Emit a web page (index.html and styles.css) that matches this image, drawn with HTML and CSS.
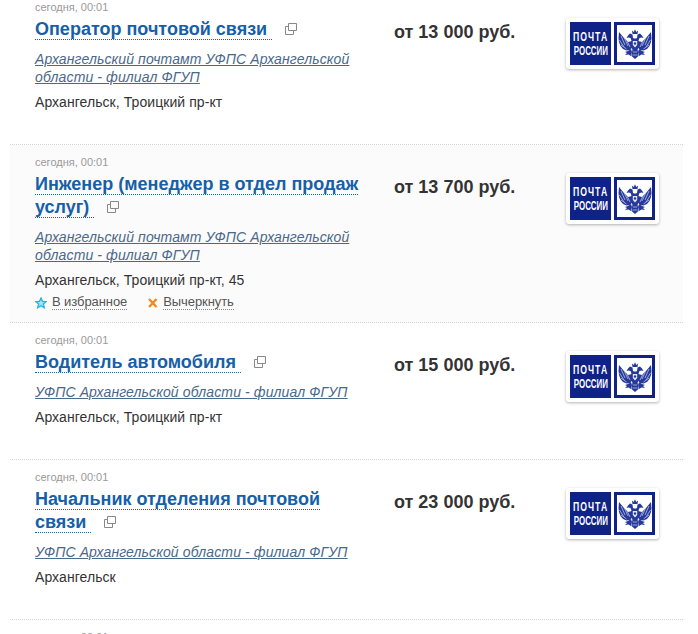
FILE: index.html
```html
<!DOCTYPE html>
<html lang="en">
<head>
    <meta charset="UTF-8">
    <meta name="viewport" content="width=device-width, initial-scale=1.0">
    <title>Вакансии</title>
    <link rel="stylesheet" href="styles.css">
</head>
<body>
    <svg class="defs" width="0" height="0">
        <g id="eagle-half">
            <!-- wing -->
            <path d="M14 12 L10 13 L6 9 L1 3 L.5 9 L1 13 L2.5 17 L5 20 L8.5 21.5 L12 21 L14.5 18 Z" fill="#26399a"/>
            <path d="M3 7 L7 16 M1.5 11 L6 18 M3 16 L8.5 20 M6 8.5 L10 17 M9 12 L12 18" stroke="#b9c2e8" stroke-width="0.8" fill="none"/>
            <!-- head -->
            <path d="M17 14 L14.5 14 L12.5 9 L10.5 8.5 L8.5 9 L10 6.5 L12 4.5 L14.5 5.5 L15 9 L17 10 Z" fill="#26399a"/>
            <!-- leg and tail -->
            <path d="M13 20 L10 22 L7 23 L9 24 L7 26 L10.5 25.5 L13 27 L14 23 Z" fill="#26399a"/>
            <path d="M14.5 20 L13.5 27 L17 30 L17 20 Z" fill="#26399a"/>
            <path d="M15 23 L17 23 M14.5 26 L17 26" stroke="#b9c2e8" stroke-width="0.8"/>
        </g>
        <symbol id="eagle" viewBox="0 0 34 30">
            <use href="#eagle-half"/>
            <use href="#eagle-half" transform="matrix(-1 0 0 1 34 0)"/>
            <!-- crown and breast -->
            <path d="M14.5 5 L14 1.5 L15.8 3 L17 .3 L18.2 3 L20 1.5 L19.5 5 Z" fill="#26399a"/>
            <ellipse cx="17" cy="15.5" rx="4.2" ry="6" fill="#26399a"/>
            <path d="M14.8 12 H19.2 V16 L17 18.5 L14.8 16 Z" fill="#e3e6f6"/>
            <circle cx="17" cy="14.5" r="1.2" fill="#26399a"/>
        </symbol>
        <symbol id="ext" viewBox="0 0 12 12">
            <path d="M3.5 .5 H11.5 V7.5 H3.5 Z M.5 3.5 H3.5 M.5 3.5 V11.5 H8.5 V7.5" fill="none" stroke="#888" stroke-width="1"/>
        </symbol>
    </svg>

    <div class="vacancy-list">
        <div class="vacancy">
            <div class="info">
                <div class="date">сегодня, 00:01</div>
                <h3 class="title"><a href="#">Оператор почтовой связи&nbsp;</a><svg class="ext-icon"><use href="#ext"/></svg></h3>
                <a class="company" href="#">Архангельский почтамт УФПС Архангельской области - филиал ФГУП</a>
                <div class="address">Архангельск, Троицкий пр-кт</div>
            </div>
            <div class="salary">от 13 000 руб.</div>
            <div class="logo">
                <div class="logo-text"><span class="logo-top">ПОЧТА</span><span class="logo-bottom">РОССИИ</span></div>
                <div class="logo-frame"><svg class="eagle"><use href="#eagle"/></svg></div>
            </div>
        </div>

        <div class="vacancy active">
            <div class="info">
                <div class="date">сегодня, 00:01</div>
                <h3 class="title"><a href="#">Инженер (менеджер в отдел продаж услуг)&nbsp;</a><svg class="ext-icon"><use href="#ext"/></svg></h3>
                <a class="company" href="#">Архангельский почтамт УФПС Архангельской области - филиал ФГУП</a>
                <div class="address">Архангельск, Троицкий пр-кт, 45</div>
                <div class="actions">
                    <span class="action">
                        <svg class="action-icon" viewBox="0 0 12 12"><path d="M6 1 L7.5 4.3 L11.2 4.6 L8.4 7 L9.3 10.8 L6 8.8 L2.7 10.8 L3.6 7 L.8 4.6 L4.5 4.3 Z" fill="#9fe6fb" stroke="#1fb5ea" stroke-width="1.3"/></svg>
                        <a href="#">В избранное</a>
                    </span>
                    <span class="action">
                        <svg class="action-icon cross" viewBox="0 0 11 12"><path d="M2 2 L9.5 10 M9.5 2 L2 10" stroke="#f08a24" stroke-width="2.4"/></svg>
                        <a href="#">Вычеркнуть</a>
                    </span>
                </div>
            </div>
            <div class="salary">от 13 700 руб.</div>
            <div class="logo">
                <div class="logo-text"><span class="logo-top">ПОЧТА</span><span class="logo-bottom">РОССИИ</span></div>
                <div class="logo-frame"><svg class="eagle"><use href="#eagle"/></svg></div>
            </div>
        </div>

        <div class="vacancy">
            <div class="info">
                <div class="date">сегодня, 00:01</div>
                <h3 class="title"><a href="#">Водитель автомобиля&nbsp;</a><svg class="ext-icon"><use href="#ext"/></svg></h3>
                <a class="company" href="#">УФПС Архангельской области - филиал ФГУП</a>
                <div class="address">Архангельск, Троицкий пр-кт</div>
            </div>
            <div class="salary">от 15 000 руб.</div>
            <div class="logo">
                <div class="logo-text"><span class="logo-top">ПОЧТА</span><span class="logo-bottom">РОССИИ</span></div>
                <div class="logo-frame"><svg class="eagle"><use href="#eagle"/></svg></div>
            </div>
        </div>

        <div class="vacancy">
            <div class="info">
                <div class="date">сегодня, 00:01</div>
                <h3 class="title"><a href="#">Начальник отделения почтовой связи&nbsp;</a><svg class="ext-icon"><use href="#ext"/></svg></h3>
                <a class="company" href="#">УФПС Архангельской области - филиал ФГУП</a>
                <div class="address">Архангельск</div>
            </div>
            <div class="salary">от 23 000 руб.</div>
            <div class="logo">
                <div class="logo-text"><span class="logo-top">ПОЧТА</span><span class="logo-bottom">РОССИИ</span></div>
                <div class="logo-frame"><svg class="eagle"><use href="#eagle"/></svg></div>
            </div>
        </div>

        <div class="vacancy">
            <div class="info">
                <div class="date">сегодня, 00:01</div>
            </div>
        </div>
    </div>
</body>
</html>
```

FILE: styles.css
```css
* {
    margin: 0;
    padding: 0;
    box-sizing: border-box;
}

html {
    overflow: hidden;
}

body {
    font-family: 'Liberation Sans', Arial, sans-serif;
    background: #fff;
    color: #333;
    height: 634px;
    overflow: hidden;
}

.defs {
    display: block;
    height: 0;
}

.vacancy-list {
    width: 673px;
    margin: -10px 0 0 10px;
}

.vacancy {
    display: grid;
    grid-template-columns: 359px 172px 94px;
    padding: 10px 0 32px 25px;
    border-bottom: 1px dotted #d4d4d4;
}

.vacancy.active {
    background: #fbfbfb;
    padding-bottom: 12px;
}

.info {
    min-width: 0;
    padding-right: 30px;
}

.date {
    font-size: 11px;
    line-height: 14px;
    color: #999;
}

.title {
    font-size: 18px;
    line-height: 23px;
    font-weight: bold;
    margin-top: 4px;
    color: #1560a8;
}

.title a {
    color: #1560a8;
    text-decoration: none;
    border-bottom: 1px dotted #1560a8;
}

.ext-icon {
    width: 12px;
    height: 12px;
    margin-left: 13px;
}

.company {
    display: block;
    margin-top: 9px;
    font-size: 14px;
    line-height: 18px;
    font-style: italic;
    letter-spacing: 0.12px;
    color: #4a6888;
}

.address {
    margin-top: 6px;
    font-size: 14px;
    line-height: 20px;
    letter-spacing: 0.07px;
    color: #333;
}

.actions {
    display: flex;
    gap: 20px;
    margin-top: 5px;
    font-size: 13px;
    line-height: 18px;
}

.action {
    display: flex;
    align-items: center;
    gap: 5px;
}

.action a {
    color: #555;
    text-decoration: none;
    border-bottom: 1px dotted #888;
    line-height: 14px;
    letter-spacing: -0.08px;
}

.action-icon {
    width: 12px;
    height: 12px;
}

.action-icon.cross {
    width: 11px;
}

.salary {
    font-size: 18px;
    font-weight: bold;
    line-height: 23px;
    color: #333;
    margin-top: 21px;
}

.logo {
    display: flex;
    gap: 3px;
    width: 93px;
    height: 51px;
    margin-top: 18px;
    padding: 4px;
    background: #fff;
    border-radius: 3px;
    box-shadow: 0 1px 3px rgba(0, 0, 0, 0.3);
}

.logo-text {
    width: 41px;
    background: #0f2288;
    color: #fff;
    font-size: 12px;
    line-height: 14px;
    font-weight: bold;
    display: flex;
    flex-direction: column;
    align-items: center;
    justify-content: center;
}

.logo-top {
    transform: scaleX(0.72);
    letter-spacing: 1.5px;
}

.logo-bottom {
    transform: scaleX(0.66);
}

.logo-frame {
    width: 41px;
    border: 3px solid #0f2288;
    background: #fff;
    display: flex;
    align-items: center;
    justify-content: center;
}

.eagle {
    width: 34px;
    height: 30px;
}
```
